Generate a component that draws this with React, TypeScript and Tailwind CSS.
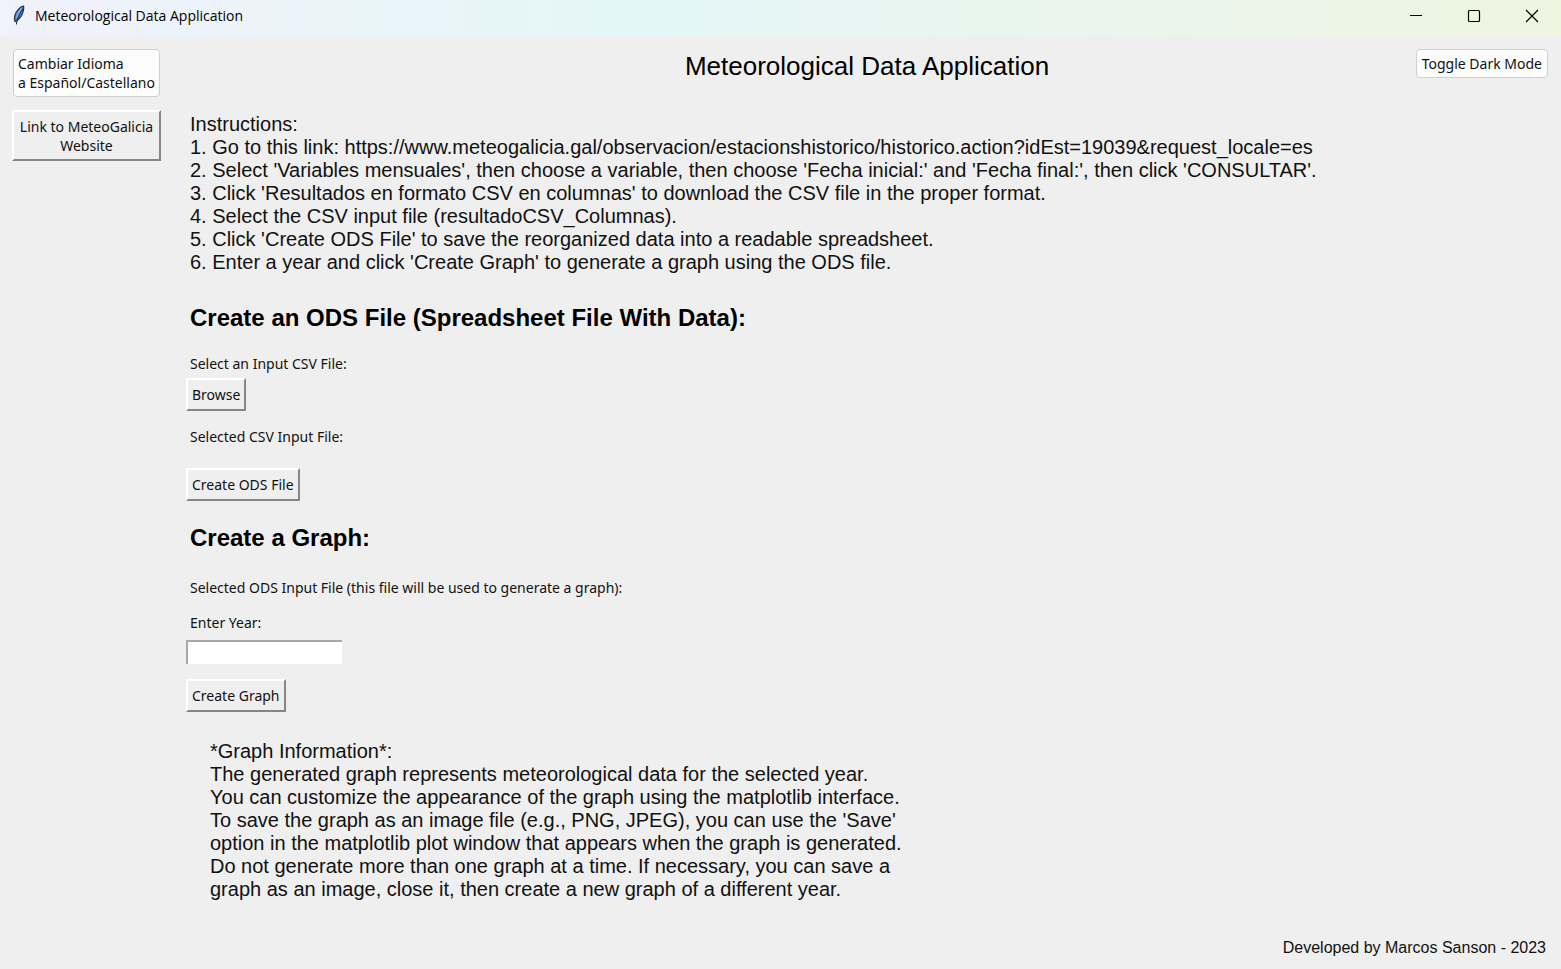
import type { ButtonHTMLAttributes } from "react";
import clsx from "clsx";

function RaisedButton({ className, ...rest }: ButtonHTMLAttributes<HTMLButtonElement>) {
  return (
    <button
      type="button"
      className={clsx(
        "border-2 border-t-white border-l-white border-r-[#858585] border-b-[#858585] bg-[#efefef] px-1 text-center whitespace-nowrap",
        className
      )}
      {...rest}
    />
  );
}

function FlatButton({ className, ...rest }: ButtonHTMLAttributes<HTMLButtonElement>) {
  return (
    <button
      type="button"
      className={clsx(
        "rounded-[4px] border border-[#cfcfcf] bg-[#fdfdfd] text-left whitespace-nowrap",
        className
      )}
      {...rest}
    />
  );
}

function FeatherIcon() {
  return (
    <svg width="14" height="22" viewBox="0 0 14 22" aria-hidden="true">
      <path
        d="M11.6 1C8 1.600 4 6 2.800 10.500c-.6 2.400-.5 4.600.2 6l1.400-.5c3.300-2.200 5.800-5.500 6.700-9.300.5-2 .8-4 .5-5.700z"
        fill="#4a86cc"
        stroke="#2b3442"
        strokeWidth="1.200"
      />
      <path d="M9.800 3.200C7.500 5.500 5.500 9 4.500 13" stroke="#8fbdf0" strokeWidth="1.300" fill="none" />
      <path d="M10.800 3.500C8 8.500 5 13 4.300 19.500" stroke="#1d2530" strokeWidth="1" fill="none" />
    </svg>
  );
}

function TitleBar() {
  return (
    <header className="flex h-9 items-center bg-linear-to-r from-[#f1f2fb] via-[#e4f6f8] via-40% to-[#eff5e1] pr-[19px] pl-3">
      <div className="pb-1">
        <FeatherIcon />
      </div>
      <span className="ml-[9px] flex-1 pb-1 font-['Open_Sans','Noto_Sans',sans-serif] text-[14px] leading-5 text-black">
        Meteorological Data Application
      </span>
      <div className="flex items-center gap-[38px] pb-1">
        <button type="button" aria-label="Minimize" className="size-5">
          <svg width="20" height="20" viewBox="0 0 20 20" stroke="#000" fill="none">
            <path d="M4 9.500h12" />
          </svg>
        </button>
        <button type="button" aria-label="Maximize" className="size-5">
          <svg width="20" height="20" viewBox="0 0 20 20" stroke="#000" fill="none">
            <rect x="4.500" y="4.500" width="11" height="11" rx="1" strokeWidth="1.200" />
          </svg>
        </button>
        <button type="button" aria-label="Close" className="size-5">
          <svg width="20" height="20" viewBox="0 0 20 20" stroke="#000" fill="none">
            <path d="M4 4l12 12M16 4L4 16" strokeWidth="1.200" />
          </svg>
        </button>
      </div>
    </header>
  );
}

const instructions = [
  "1. Go to this link: https://www.meteogalicia.gal/observacion/estacionshistorico/historico.action?idEst=19039&request_locale=es",
  "2. Select 'Variables mensuales', then choose a variable, then choose 'Fecha inicial:' and 'Fecha final:', then click 'CONSULTAR'.",
  "3. Click 'Resultados en formato CSV en columnas' to download the CSV file in the proper format.",
  "4. Select the CSV input file (resultadoCSV_Columnas).",
  "5. Click 'Create ODS File' to save the reorganized data into a readable spreadsheet.",
  "6. Enter a year and click 'Create Graph' to generate a graph using the ODS file.",
];

const graphInfo = [
  "The generated graph represents meteorological data for the selected year.",
  "You can customize the appearance of the graph using the matplotlib interface.",
  "To save the graph as an image file (e.g., PNG, JPEG), you can use the 'Save'",
  "option in the matplotlib plot window that appears when the graph is generated.",
  "Do not generate more than one graph at a time. If necessary, you can save a",
  "graph as an image, close it, then create a new graph of a different year.",
];

export default function App() {
  return (
    <div className="flex min-h-screen flex-col bg-[#efefef] font-['Noto_Sans','Open_Sans',sans-serif] text-[14px] leading-[19px] text-[#111]">
      <TitleBar />
      <div className="flex flex-1 gap-[25px] pr-[13px] pl-3">
        <aside className="flex w-[149px] shrink-0 flex-col items-stretch gap-[13px] pt-[13px]">
          <FlatButton className="mx-px h-12 px-1">
            Cambiar Idioma
            <br />a Español/Castellano
          </FlatButton>
          <RaisedButton className="h-[51px]">
            Link to MeteoGalicia
            <br />
            Website
          </RaisedButton>
        </aside>

        <main className="flex min-w-0 flex-1 flex-col pb-[11px]">
          <div className="grid grid-cols-1 pt-[13px]">
            <h1 className="col-start-1 row-start-1 justify-self-center py-px font-['Liberation_Sans',Arial,sans-serif] text-[26px] leading-8 text-black">
              Meteorological Data Application
            </h1>
            <FlatButton className="col-start-1 row-start-1 h-[29px] self-start justify-self-end px-[5px]">
              Toggle Dark Mode
            </FlatButton>
          </div>

          <section className="mt-[30px] pl-1 font-['Liberation_Sans',Arial,sans-serif] text-[20px] leading-[23px]">
            <p>Instructions:</p>
            <ol>
              {instructions.map((line) => (
                <li key={line}>{line}</li>
              ))}
            </ol>
          </section>

          <section className="flex flex-col items-start">
            <h2 className="mt-7 pl-1 font-['Liberation_Sans',Arial,sans-serif] text-[24px] leading-8 font-bold text-black">
              Create an ODS File (Spreadsheet File With Data):
            </h2>
            <p className="mt-5 pl-1">Select an Input CSV File:</p>
            <RaisedButton className="mt-[5px] h-[33px]">Browse</RaisedButton>
            <p className="mt-4 pl-1">Selected CSV Input File:</p>
            <RaisedButton className="mt-[22px] h-[33px]">Create ODS File</RaisedButton>
          </section>

          <section className="flex flex-col items-start">
            <h2 className="mt-[21px] pl-1 font-['Liberation_Sans',Arial,sans-serif] text-[24px] leading-8 font-bold text-black">
              Create a Graph:
            </h2>
            <p className="mt-6 pl-1">Selected ODS Input File (this file will be used to generate a graph):</p>
            <label htmlFor="year" className="mt-4 pl-1">
              Enter Year:
            </label>
            <input
              id="year"
              type="text"
              className="mt-2 h-6 w-[156px] border-t-2 border-l-2 border-t-[#a8a8a8] border-l-[#a8a8a8] bg-white px-1 outline-none"
            />
            <RaisedButton className="mt-[15px] h-[33px]">Create Graph</RaisedButton>
          </section>

          <section className="mt-7 pl-6 font-['Liberation_Sans',Arial,sans-serif] text-[20px] leading-[23px]">
            <p>*Graph Information*:</p>
            {graphInfo.map((line) => (
              <p key={line}>{line}</p>
            ))}
          </section>

          <footer className="mt-auto self-end pr-0.5 font-['Liberation_Sans',Arial,sans-serif] text-[16px] leading-5">
            Developed by Marcos Sanson - 2023
          </footer>
        </main>
      </div>
    </div>
  );
}
